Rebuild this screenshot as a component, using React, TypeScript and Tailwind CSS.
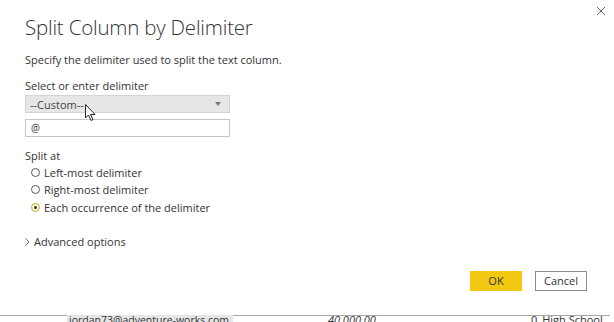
import React from "react";

export default function App() {
  const font = { fontFamily: '"Open Sans", "Noto Sans", sans-serif' };
  return (
    <div className="w-[614px] h-[322px] overflow-hidden bg-white relative text-[#333]" style={font}>
      <div className="h-[315px] relative">
        <div className="pl-[25px] pt-[12px]">
          <div className="text-[20.5px] font-light leading-[30px] text-[#333] tracking-[-0.2px]">Split Column by Delimiter</div>
          <div className="text-[11px] leading-[16px] mt-[10px] text-[#333]">Specify the delimiter used to split the text column.</div>
          <div className="text-[11px] leading-[16px] mt-[10px]">Select or enter delimiter</div>
          <div className="mt-[1px] w-[205px] h-[18px] bg-[#e6e6e6] border border-[#d4d4d4] flex items-center justify-between pl-[4px] pr-[8px]">
            <span className="text-[11px] leading-none text-[#444]">--Custom--</span>
            <svg width="6" height="4" viewBox="0 0 6 4"><path d="M0 0 L6 0 L3 4 Z" fill="#777" /></svg>
          </div>
          <div className="mt-[6px] w-[205px] h-[18px] bg-white border border-[#c6c6c6] flex items-center pl-[5px]">
            <span className="text-[10px] leading-none text-[#333]">@</span>
          </div>
          <div className="text-[11px] leading-[16px] mt-[11px]">Split at</div>
          <div className="mt-[0px] pl-[6px] flex flex-col gap-[1.5px]">
            {[
              { label: "Left-most delimiter", on: false },
              { label: "Right-most delimiter", on: false },
              { label: "Each occurrence of the delimiter", on: true },
            ].map((r) => (
              <div key={r.label} className="flex items-center h-[16px] gap-[4px]">
                {r.on ? (
                  <div className="w-[9px] h-[9px] rounded-full border border-[#bfae4a] bg-[#fdf6c6] flex items-center justify-center">
                    <div className="w-[3px] h-[3px] rounded-full bg-[#333]" />
                  </div>
                ) : (
                  <div className="w-[9px] h-[9px] rounded-full border border-[#555] bg-white" />
                )}
                <span className="text-[11px] leading-none">{r.label}</span>
              </div>
            ))}
          </div>
          <div className="mt-[21px] flex items-center gap-[4px]">
            <svg width="5" height="8" viewBox="0 0 5 8"><path d="M0.5 0.5 L4 4 L0.5 7.5" fill="none" stroke="#666" strokeWidth="1" /></svg>
            <span className="text-[11px] leading-none">Advanced options</span>
          </div>
        </div>
        <div className="absolute right-[27px] top-[271px] flex gap-[13px]">
          <div className="w-[52px] h-[20px] bg-[#f2c811] flex items-center justify-center text-[11px] text-[#333]">OK</div>
          <div className="w-[52px] h-[20px] bg-white border border-[#8c8c8c] flex items-center justify-center text-[11px] text-[#333]">Cancel</div>
        </div>
        <svg className="absolute left-[596px] top-[6px]" width="10" height="10" viewBox="0 0 10 10">
          <path d="M1 1 L9 9 M9 1 L1 9" stroke="#666" strokeWidth="1" />
        </svg>
        <svg className="absolute left-[85px] top-[104px]" width="12" height="18" viewBox="0 0 12 18">
          <path d="M0.5 0.5 L0.5 14 L3.5 11 L6 16.5 L8 15.5 L5.5 10.5 L10 10.5 Z" fill="white" stroke="#222" strokeWidth="1" />
        </svg>
      </div>
      <div className="h-[1px] bg-[#a8a8a8] w-[610px]" />
      <div className="flex h-[10px] text-[11px] leading-[10px] text-[#333] whitespace-nowrap">
        <div className="ml-[67px] w-[166px] bg-[#e6e6e6] pl-[2px] -mt-[1px] overflow-hidden text-[10.5px]">jordan73@adventure-works.com</div>
        <div className="ml-[95px] italic -mt-[1px]">40,000.00</div>
        <div className="ml-[155px] -mt-[1px]">0</div>
        <div className="ml-[5px] -mt-[1px]">High School</div>
      </div>
    </div>
  );
}
